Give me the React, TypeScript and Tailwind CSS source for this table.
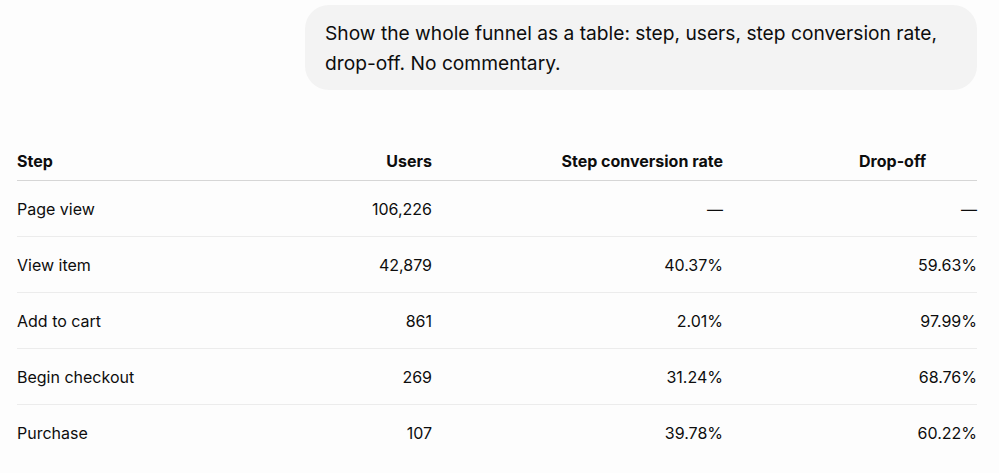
const rows = [
  { step: "Page view", users: "106,226", rate: "—", drop: "—" },
  { step: "View item", users: "42,879", rate: "40.37%", drop: "59.63%" },
  { step: "Add to cart", users: "861", rate: "2.01%", drop: "97.99%" },
  { step: "Begin checkout", users: "269", rate: "31.24%", drop: "68.76%" },
  { step: "Purchase", users: "107", rate: "39.78%", drop: "60.22%" },
];

const cols = "grid grid-cols-[200px_215px_291px_254px]";

export default function App() {
  return (
    <div className="min-h-[473px] w-[999px] bg-[#fdfdfd] text-[#0d0d0d] font-['Inter',sans-serif]">
      {/* user message */}
      <div className="flex justify-end pr-[22px] pt-[5px]">
        <div className="w-[672px] rounded-[24px] bg-[#f3f3f3] px-5 pt-[13px] pb-[12px] text-[19.2px] leading-[30px]">
          Show the whole funnel as a table: step, users, step conversion rate,
          drop-off. No commentary.
        </div>
      </div>

      {/* table */}
      <div className="ml-[17px] mt-[51px] w-[960px] text-[16px]">
        <div className={`${cols} h-[40px] items-center border-b border-[#d6d6d6] font-bold`}>
          <div>Step</div>
          <div className="text-right">Users</div>
          <div className="text-right">Step conversion rate</div>
          <div className="text-right pr-[51px]">Drop-off</div>
        </div>
        {rows.map((r, i) => (
          <div
            key={r.step}
            className={`${cols} h-[56px] items-center ${
              i < rows.length - 1 ? "border-b border-[#ececec]" : ""
            }`}
          >
            <div>{r.step}</div>
            <div className="text-right">{r.users}</div>
            <div className="text-right">{r.rate}</div>
            <div className="text-right">{r.drop}</div>
          </div>
        ))}
      </div>
    </div>
  );
}
